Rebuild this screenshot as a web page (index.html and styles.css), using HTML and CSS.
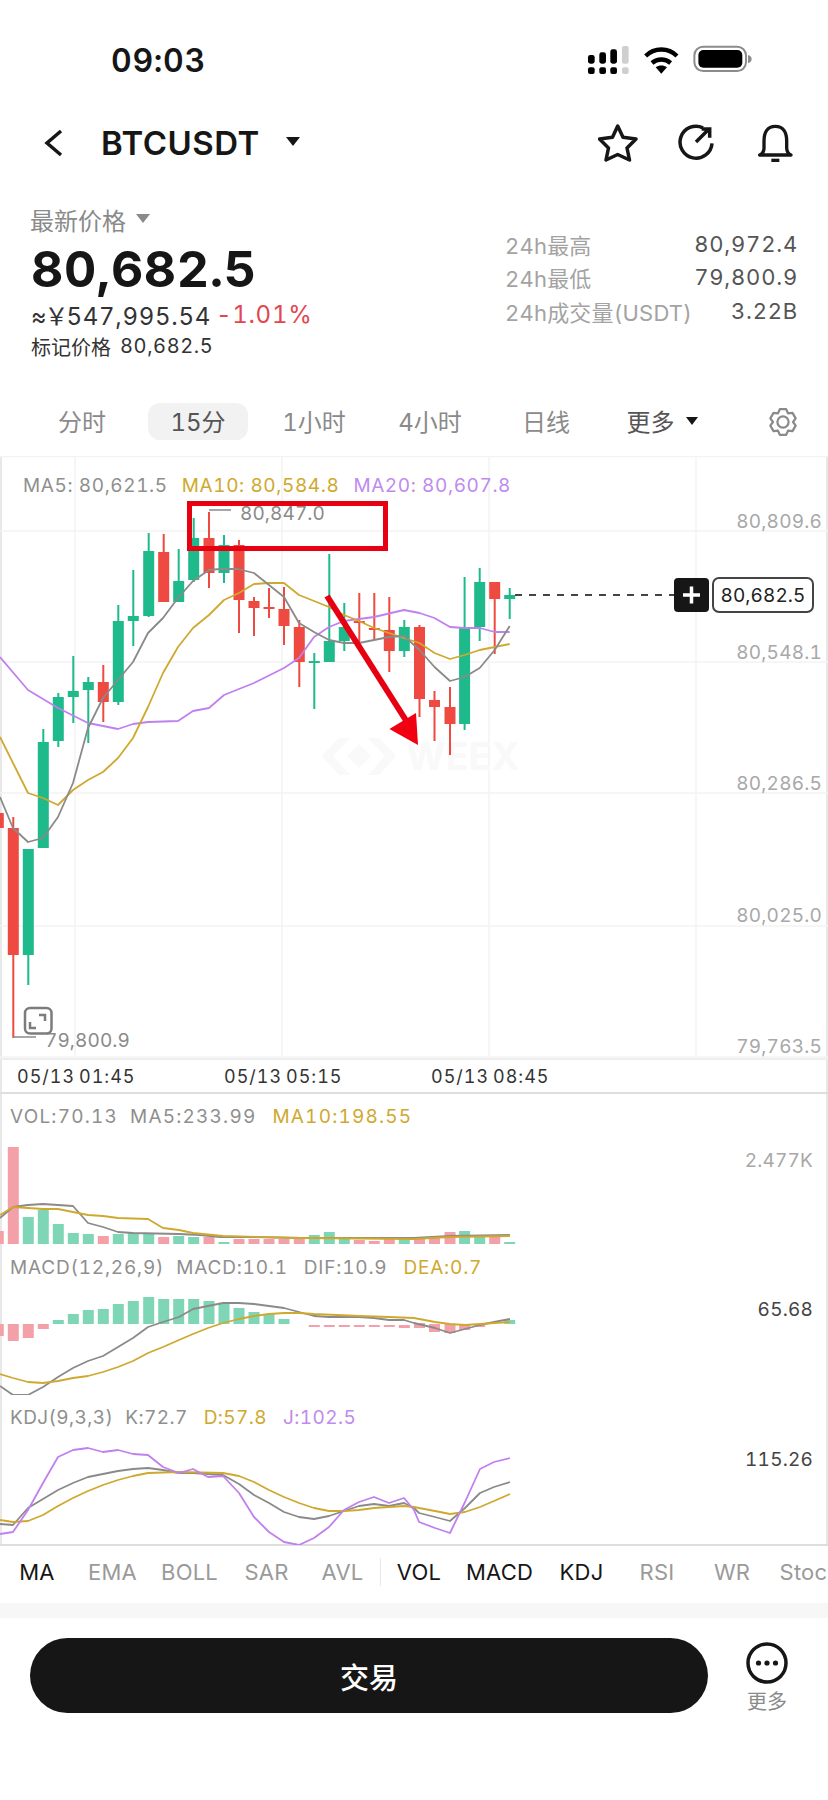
FILE: index.html
```html
<!DOCTYPE html>
<html lang="zh">
<head>
<meta charset="utf-8">
<title>BTCUSDT</title>
<link rel="stylesheet" href="styles.css">
</head>
<body>
<div class="page">
  <div class="status">
    <span class="time">09:03</span>
    <div class="status-icons">
      <svg class="ic-signal" viewBox="20 30 130 90"><g fill="#000"><rect x="23" y="97" width="20" height="20" rx="6"/><rect x="57" y="97" width="20" height="20" rx="6"/><rect x="90" y="97" width="20" height="20" rx="6"/><rect x="23" y="60" width="20" height="26" rx="7"/><rect x="57" y="52" width="20" height="34" rx="7"/><rect x="90" y="43" width="20" height="43" rx="7"/></g><g fill="#cfcfcf"><rect x="125" y="97" width="20" height="20" rx="6"/><rect x="125" y="33" width="20" height="53" rx="6"/></g></svg>
      <svg class="ic-wifi" viewBox="185 30 115 90"><g fill="none" stroke="#000" stroke-width="13"><path d="M196 63C222 37 264 37 290 63"/><path d="M215 84C231 70 255 70 271 84"/></g><path d="M226 97C236 90 250 90 260 97L243 116Z" fill="#000"/></svg>
      <svg class="ic-battery" viewBox="335 35 185 85"><rect x="342" y="40" width="155" height="73" rx="26" fill="#fff" stroke="#8c8c8c" stroke-width="6"/><rect x="354" y="50" width="132" height="53" rx="15" fill="#000"/><path d="M503 65C512 68 514 72 514 77C514 83 511 87 503 90Z" fill="#8c8c8c"/></svg>
    </div>
  </div>

  <header class="nav">
    <svg class="ic-back" viewBox="0 0 20 28"><path d="M17 2L3 14L17 26"/></svg>
    <h1 class="symbol">BTCUSDT</h1>
    <span class="caret caret-dark"></span>
    <div class="nav-actions">
      <svg class="ic-star" viewBox="0 0 40 38"><path d="M19.7 2L25 13.2L38 15L29 24L31.5 36L19.7 30.5L8 36L10.5 24L1.5 15L14.5 13.2Z"/></svg>
      <svg class="ic-share" viewBox="678 124 38 38"><path d="M703 127.8A16 16 0 1 0 712 143.3"/><path d="M696 142L709 129M701.7 129H709.7V137.7"/></svg>
      <svg class="ic-bell" viewBox="500 22 110 122"><path d="M555 32C530 32 521 52 521 76V98Q520 113 508 118H602Q590 113 589 98V76C589 52 580 32 555 32Z"/><path d="M543 134H567"/></svg>
    </div>
  </header>

  <section class="summary">
    <div class="summary-left">
      <div class="latest-label">最新价格<span class="caret caret-gray"></span></div>
      <div class="latest-price">80,682.5</div>
      <div class="latest-fiat"><span><span class="fiat-sign">≈￥</span>547,995.54</span><span class="down">-1.01%</span></div>
      <div class="latest-mark"><span>标记价格</span><span class="mark-num">80,682.5</span></div>
    </div>
    <dl class="stats">
      <div class="stat"><dt>24h最高</dt><dd>80,972.4</dd></div>
      <div class="stat"><dt>24h最低</dt><dd>79,800.9</dd></div>
      <div class="stat"><dt>24h成交量(USDT)</dt><dd>3.22B</dd></div>
    </dl>
  </section>

  <nav class="periods">
    <span class="period">分时</span>
    <span class="period period-active">15分</span>
    <span class="period">1小时</span>
    <span class="period">4小时</span>
    <span class="period">日线</span>
    <span class="period period-more">更多<span class="caret caret-dark"></span></span>
    <svg class="ic-gear" viewBox="0 0 24 24"><path d="M9.27 1.04H14.73L16.3 4.55L20.13 4.15L22.86 8.88L20.6 12L22.86 15.12L20.13 19.85L16.3 19.45L14.73 22.96H9.27L7.7 19.45L3.87 19.85L1.14 15.12L3.4 12L1.14 8.88L3.87 4.15L7.7 4.55Z"/><circle cx="12" cy="12" r="4.800"/></svg>
  </nav>

  <section class="chart">
    <div class="panel panel-main">
      <svg class="plot" viewBox="0 456 828 602">
        <g class="grid">
          <path d="M0 456.5H828M0 531H828M0 662H828M0 793H828M0 926H828M0 1057H828"/>
          <path d="M75 456V1058M282 456V1058M489 456V1058M696 456V1058"/>
        </g>
        <g class="watermark">
          <path d="M322 756L339 738H350L333 756L350 775H339ZM396 756L379 738H368L385 756L368 775H379Z"/>
          <path d="M359 744L371 756L359 768L347 756Z"/>
          <text x="406" y="770">WEEX</text>
        </g>
        <path class="wick-up" d="M28.3 849V985M43.3 729V848M58.3 693V747M73.3 656V723M88.3 677V743M118.3 605V705M133.3 570V646M148.7 533V617M178.7 549V602M193.7 518V582M224 535V583M314.3 653V709M329.3 554V662M344.3 603V651M404.3 620V657M464.6 577V730M479.7 568V641M509.7 588V619"/>
        <path class="body-up" d="M22.8 849h11v106h-11zM37.8 742h11v106h-11zM52.8 697h11v44h-11zM67.8 691h11v6h-11zM82.8 682h11v8h-11zM112.8 621h11v81h-11zM127.8 616h11v5h-11zM143.2 551h11v65h-11zM173.2 581h11v21h-11zM188.2 538h11v42h-11zM218.5 545h11v28h-11zM308.8 661h11v2h-11zM323.8 641h11v21h-11zM338.8 627h11v14h-11zM398.8 627h11v24h-11zM459.1 628h11v96h-11zM474.2 582h11v45h-11zM504.2 595h11v4h-11z"/>
        <path class="wick-down" d="M-2 805V835M13.3 817V1038M103.3 665V722M163.7 534V602M209 512V588M239 540V633M254 597V636M269 588V618M284 587V645M299.3 620V687M359.3 593V642M374.3 593V640M389.3 597V672M419.5 625V717M434.5 691V741M450 687V755M494.7 582V654"/>
        <path class="body-down" d="M-7.2 813h11v15h-11zM7.8 828h11v127h-11zM97.8 682h11v20h-11zM158.2 552h11v50h-11zM203.5 538h11v35h-11zM233.5 545h11v55h-11zM248.5 601h11v7h-11zM263.5 607h11v2h-11zM278.5 609h11v17h-11zM293.8 627h11v35h-11zM353.8 621h11v2h-11zM368.8 628h11v2h-11zM383.8 630h11v21h-11zM414 627h11v72h-11zM429 700h11v7h-11zM444.5 707h11v17h-11zM489.2 582h11v17h-11z"/>
        <polyline class="ma ma-purple" points="0,657 28,690 58,708 88,723 118,729 133,724 148,722 178,721 193,711 209,708 224,695 254,683 284,668 299,658 314,637 329,627 344,621 374,617 404,610 419.5,613 434.5,618 450,627 464.6,628 479.7,628 494.7,632 509.7,632"/>
        <polyline class="ma ma-yellow" points="0,737 28,793 43,798 58,805 73,790 88,780 103,772 118,758 133,738 148,707 163,673 178,647 193,628 209,615 224,600 239,593 254,584 269,583 284,583 299,595 314,601 329,607 344,615 359,621 374,628 389,633 404,638 419.5,643 434.5,653 450,659 464.6,655 479.7,650 494.7,647 509.7,644"/>
        <polyline class="ma ma-gray" points="0,797 13,828 28,842 43,838 58,817 73,783 88,728 103,698 118,680 133,662 148,633 163,618 178,598 193,581 209,570 220,569 238,569 254,573 269,585 284,597 299,623 314,632 329,640 344,643 359,643 374,640 389,637 404,636 419.5,650 434.5,667 450,681 464.6,677 479.7,668 494.7,650 509.7,626"/>
        <path class="mark-line" d="M209 510H231M13 1037H36"/>
        <text class="mark-text" x="240" y="520">80,847.0</text>
        <text class="mark-text" x="45" y="1047">79,800.9</text>
        <text class="axis" x="822" y="528">80,809.6</text>
        <text class="axis" x="822" y="659">80,548.1</text>
        <text class="axis" x="822" y="790">80,286.5</text>
        <text class="axis" x="822" y="922">80,025.0</text>
        <text class="axis" x="822" y="1053">79,763.5</text>
        <path class="last-line" d="M515 595H674"/>
        <rect class="plus-box" x="674" y="578" width="35" height="34" rx="4"/>
        <path class="plus" d="M691.500 586.500V603.500M683 595H700"/>
        <rect class="last-tag" x="713" y="578" width="100" height="34" rx="6"/>
        <text class="last-text" x="763" y="601.500">80,682.5</text>
        <rect class="shot-box" x="189.500" y="503.500" width="196" height="45"/>
        <path class="shot-arrow" d="M327 596L407 722"/>
        <path class="shot-head" d="M416 713L389.400 729L418 745Z"/>
        <g class="ic-expand">
          <rect x="25" y="1008" width="26.500" height="25.500" rx="5"/>
          <path d="M39 1015H45V1021M30 1022V1028H36"/>
        </g>
      </svg>
      <div class="legend legend-main"><span class="c-gray">MA5: 80,621.5</span><span class="c-yellow">MA10: 80,584.8</span><span class="c-purple">MA20: 80,607.8</span></div>
    </div>

    <div class="axis-row"><span>05/13 01:45</span><span>05/13 05:15</span><span>05/13 08:45</span></div>

    <div class="panel panel-sub panel-vol">
      <svg class="plot" viewBox="0 1094 828 151">
        <path class="bar-down" d="M-7.200 1231h11v13h-11zM7.800 1147h11v97h-11zM97.800 1236h11v8h-11zM158.200 1237h11v7h-11zM203.500 1237h11v7h-11zM233.500 1239h11v5h-11zM248.500 1239h11v5h-11zM263.500 1239h11v5h-11zM278.500 1239h11v5h-11zM293.800 1239h11v5h-11zM353.800 1240h11v4h-11zM368.800 1241h11v3h-11zM383.800 1239h11v5h-11zM414 1238h11v6h-11zM429 1238h11v6h-11zM444.500 1232h11v12h-11zM489.200 1237h11v7h-11z"/>
        <path class="bar-up" d="M22.800 1217h11v27h-11zM37.800 1210h11v34h-11zM52.800 1224h11v20h-11zM67.800 1233h11v11h-11zM82.800 1234h11v10h-11zM112.800 1234h11v10h-11zM127.800 1233h11v11h-11zM143.200 1234h11v10h-11zM173.200 1236h11v8h-11zM188.200 1237h11v7h-11zM218.500 1242h11v2h-11zM308.800 1235h11v9h-11zM323.800 1232h11v12h-11zM338.800 1239h11v5h-11zM398.800 1239h11v5h-11zM459.100 1231h11v13h-11zM474.200 1237h11v7h-11zM504.200 1242h11v2h-11z"/>
        <polyline class="ma ma-gray" points="0,1218 13,1207 28,1205 43,1204 73,1206 88,1223 103,1227 118,1232 133,1233 179,1234 200,1235 220,1237 253,1237 300,1238 414,1238 450,1236 510,1235"/>
        <polyline class="ma ma-yellow" points="0,1215 13,1207 43,1209 58,1209 73,1212 88,1215 103,1216 118,1218 148,1219 163,1228 179,1230 193,1233 223,1236 300,1238 414,1239 450,1237 510,1236"/>
        <text class="axis" x="813" y="1167">2.477K</text>
      </svg>
      <div class="legend legend-vol"><span class="c-gray">VOL:70.13</span><span class="c-gray">MA5:233.99</span><span class="c-yellow">MA10:198.55</span></div>
    </div>

    <div class="panel panel-sub panel-macd">
      <svg class="plot" viewBox="0 1245 828 150">
        <path class="bar-down" d="M-7.200 1324h11v12h-11zM7.800 1324h11v17h-11zM22.800 1324h11v14h-11zM37.800 1324h11v5h-11zM308.800 1325h11v2h-11zM323.800 1325h11v2h-11zM338.800 1325h11v2h-11zM353.800 1325h11v2h-11zM368.800 1325h11v2h-11zM383.800 1325h11v2h-11zM398.800 1325h11v3h-11zM414 1323h11v5h-11zM429 1324h11v8h-11zM444.500 1324h11v9h-11zM459.100 1325h11v5h-11zM474.200 1325h11v2h-11z"/>
        <path class="bar-up" d="M52.800 1320h11v4h-11zM67.800 1314h11v10h-11zM82.800 1310h11v14h-11zM97.800 1309h11v15h-11zM112.800 1304h11v20h-11zM127.800 1301h11v23h-11zM143.200 1297h11v27h-11zM158.200 1299h11v25h-11zM173.200 1299h11v25h-11zM188.200 1299h11v25h-11zM203.500 1301h11v23h-11zM218.500 1303h11v21h-11zM233.500 1308h11v16h-11zM248.500 1312h11v12h-11zM263.500 1314h11v10h-11zM278.500 1319h11v5h-11zM504.200 1320h11v4h-11z"/>
        <polyline class="ma ma-gray" points="0,1386 13,1395 28,1395 43,1387 58,1377 73,1368 88,1361 103,1356 118,1347 133,1338 148,1327 163,1322 179,1317 193,1309 208,1306 223,1303 239,1303 254,1304 269,1306 284,1308 299,1312 314,1316 329,1317 359,1317 374,1318 389,1320 404,1320 414,1323 435,1328 450,1333 465,1329 480,1325 494,1322 510,1319"/>
        <polyline class="ma ma-yellow" points="0,1374 13,1378 28,1382 43,1383 58,1381 73,1378 88,1376 103,1372 118,1367 133,1361 148,1353 163,1347 179,1340 193,1334 208,1328 223,1323 239,1319 254,1316 269,1314 284,1313 299,1313 314,1314 359,1316 389,1317 414,1318 435,1322 450,1324 465,1325 480,1324 494,1323 510,1322"/>
        <text class="axis axis-dark" x="813" y="1316">65.68</text>
      </svg>
      <div class="legend"><span class="c-gray">MACD(12,26,9)</span><span class="c-gray">MACD:10.1</span><span class="c-gray">DIF:10.9</span><span class="c-yellow">DEA:0.7</span></div>
    </div>

    <div class="panel panel-sub panel-kdj">
      <svg class="plot" viewBox="0 1395 828 150">
        <polyline class="ma ma-gray" points="0,1524 13,1525 28,1508 43,1499 58,1490 73,1483 88,1477 103,1474 118,1471 133,1469 148,1468 163,1470 179,1473 193,1473 208,1474 223,1475 239,1484 254,1495 269,1503 284,1512 299,1517 314,1519 329,1516 344,1511 359,1506 374,1504 389,1506 404,1503 414,1508 419,1513 435,1517 450,1521 465,1508 480,1493 494,1487 510,1482"/>
        <polyline class="ma ma-yellow" points="0,1520 13,1522 28,1521 43,1515 58,1506 73,1498 88,1491 103,1485 118,1480 133,1476 148,1473 179,1472 223,1473 239,1476 254,1482 269,1490 284,1497 299,1503 314,1508 329,1511 344,1511 359,1510 374,1508 389,1507 404,1506 414,1507 419,1508 435,1511 450,1514 465,1512 480,1507 494,1501 510,1494"/>
        <polyline class="ma ma-purple" points="0,1534 13,1532 28,1510 43,1483 58,1457 73,1450 88,1448 103,1452 118,1450 133,1454 148,1455 163,1467 179,1473 193,1469 208,1477 223,1476 239,1493 254,1517 269,1532 284,1542 299,1545 314,1538 329,1527 344,1510 359,1502 374,1497 389,1503 404,1498 414,1510 419,1522 435,1528 450,1533 465,1502 480,1469 494,1462 510,1458"/>
        <text class="axis axis-dark" x="813" y="1466">115.26</text>
      </svg>
      <div class="legend legend-kdj"><span class="c-gray">KDJ(9,3,3)</span><span class="c-gray">K:72.7</span><span class="c-yellow">D:57.8</span><span class="c-purple">J:102.5</span></div>
    </div>
  </section>

  <nav class="indicators">
    <span class="ind ind-on">MA</span><span class="ind">EMA</span><span class="ind">BOLL</span><span class="ind">SAR</span><span class="ind">AVL</span><span class="ind ind-on ind-split">VOL</span><span class="ind ind-on">MACD</span><span class="ind ind-on">KDJ</span><span class="ind">RSI</span><span class="ind">WR</span><span class="ind">Stoch</span>
  </nav>
  <div class="band"></div>

  <footer class="actions">
    <button class="trade">交易</button>
    <div class="more">
      <svg class="ic-more" viewBox="0 0 42 42"><circle class="ring" cx="21" cy="21" r="19"/><circle cx="12.500" cy="21" r="2.600"/><circle cx="21" cy="21" r="2.600"/><circle cx="29.500" cy="21" r="2.600"/></svg>
      <span>更多</span>
    </div>
  </footer>
</div>
</body>
</html>
```
FILE: styles.css
```css
* { box-sizing: border-box; }
html, body { margin: 0; padding: 0; background: #fff; }
body { font-family: Inter, "Noto Sans CJK SC", sans-serif; color: #161616; font-variant-numeric: tabular-nums; }
.page { width: 828px; height: 1800px; overflow: hidden; background: #fff; }

.status { height: 100px; display: flex; align-items: flex-start; padding: 42px 0 0 111px; }
.time { font-size: 32px; line-height: 38px; font-weight: 600; letter-spacing: .7px; }
.status-icons { margin-left: auto; display: flex; align-items: flex-start; padding-right: 74.6px; margin-top: 3px; }
.ic-signal { width: 43.3px; height: 30px; }
.ic-wifi { width: 38.3px; height: 30px; margin-left: 11.7px; }
.ic-battery { width: 61.7px; height: 28.3px; margin-left: 11.7px; }

.nav { height: 80px; display: flex; align-items: center; padding: 0 34.7px 0 44px; margin-top: 3px; }
.ic-back { width: 20px; height: 28px; fill: none; stroke: #161616; stroke-width: 3.5; }
.symbol { margin: 0 0 0 37px; font-size: 33px; line-height: 40px; font-weight: 600; letter-spacing: .5px; }
.caret { display: inline-block; width: 0; height: 0; border-left: 7px solid transparent; border-right: 7px solid transparent; border-top: 9px solid #161616; }
.nav .caret { margin-left: 26px; margin-top: -4px; }
.nav-actions { margin-left: auto; display: flex; align-items: center; }
.ic-star { width: 40px; height: 38px; fill: none; stroke: #161616; stroke-width: 3.5; stroke-linejoin: round; }
.ic-share { width: 38px; height: 38px; margin-left: 40px; fill: none; stroke: #161616; stroke-width: 3.5; }
.ic-bell { width: 36.7px; height: 40.7px; margin-left: 40.7px; fill: none; stroke: #161616; stroke-width: 10; stroke-linejoin: round; }

.summary { height: 220px; display: flex; justify-content: space-between; padding: 16px 30px 0 32px; }
.summary-left { display: flex; flex-direction: column; }
.latest-label { display: flex; align-items: center; height: 40px; font-size: 24px; color: #8a8a8a; margin-left: -2px; }
.caret-gray { border-top-color: #8a8a8a; margin-left: 10px; margin-top: -2px; }
.latest-price { font-size: 50px; line-height: 60px; height: 60px; font-weight: 700; margin-left: -1px; letter-spacing: .6px; }
.latest-fiat { display: flex; gap: 5px; align-items: center; height: 30px; font-size: 24px; color: #333; letter-spacing: .7px; margin-left: -1px; }
.fiat-sign { letter-spacing: -2px; }
.down { color: #e2474f; }
.latest-mark { display: flex; gap: 9px; align-items: center; height: 34px; font-size: 20px; color: #333; margin-left: -1px; }
.mark-num { letter-spacing: .6px; }
.stats { margin: 28px 0 0; width: 293px; }
.stat { display: flex; justify-content: space-between; height: 33.5px; align-items: center; font-size: 22px; letter-spacing: .2px; }
.stat dt { color: #a3a3a3; }
.stat dd { margin: 0; color: #555; letter-spacing: .8px; }

.periods { display: grid; grid-template-columns: repeat(6, 116px) auto; height: 37px; padding-left: 24px; align-items: center; justify-items: center; }
.period { width: 100px; height: 37px; line-height: 40px; border-radius: 12px; text-align: center; font-size: 24px; color: #8a8a8a; white-space: nowrap; }
.period-active { background: #f2f2f2; color: #555; }
.period-more { color: #555; display: flex; align-items: center; justify-content: center; gap: 11px; padding-top: 3px; }
.period-more .caret { border-left-width: 6.5px; border-right-width: 6.5px; border-top-width: 8px; margin-top: -4px; }
.ic-gear { width: 28px; height: 28px; margin-left: 17px; fill: none; stroke: #8a8a8a; stroke-width: 1.9; stroke-linejoin: round; }

.chart { margin-top: 16px; height: 1090px; box-shadow: inset 2px 0 #e8e8e8, inset -2px 0 #e8e8e8; border-bottom: 2px solid #dedede; }
.panel { position: relative; }
.panel-main { height: 602px; }
.plot { position: absolute; left: 0; top: 0; width: 100%; height: 100%; overflow: hidden; }
.panel-sub { height: 150px; }
.panel-vol { height: 151px; }
.legend { position: relative; display: flex; padding: 11px 0 0 10px; font-size: 19px; line-height: 24px; letter-spacing: .8px; white-space: nowrap; }
.legend span + span { margin-left: 16px; }
.legend span:nth-child(2) { margin-left: 12px; }
.legend-main { padding: 18px 0 0 23px; letter-spacing: .6px; }
.legend-main span + span, .legend-main span:nth-child(2) { margin-left: 14px; }
.legend-vol { letter-spacing: 1.2px; }
.legend-kdj { letter-spacing: .4px; }
.c-gray { color: #8f8f8f; }
.c-yellow { color: #cfa92f; }
.c-purple { color: #c08bec; }

.grid path { fill: none; stroke: #f3f3f3; stroke-width: 1.5; }
.watermark path { fill: #f9f9f9; }
.watermark text { font-size: 38px; font-weight: 700; fill: #f9f9f9; }
.wick-up { fill: none; stroke: #1fba8c; stroke-width: 2; }
.wick-down { fill: none; stroke: #ef4a41; stroke-width: 2; }
.body-up { fill: #1fba8c; }
.body-down { fill: #ef4a41; }
.bar-up { fill: #7fd6b6; }
.bar-down { fill: #f4a0a8; }
.ma { fill: none; stroke-width: 1.8; stroke-linejoin: round; }
.ma-gray { stroke: #8a8a8a; }
.ma-yellow { stroke: #cfa92f; }
.ma-purple { stroke: #c080ee; }
.mark-line { fill: none; stroke: #8a8a8a; stroke-width: 1.5; }
.mark-text { font-size: 19px; fill: #8a8a8a; letter-spacing: .1px; }
.axis { font-size: 19px; fill: #a8a8a8; text-anchor: end; letter-spacing: .2px; }
.axis-dark { fill: #444; }
.last-line { fill: none; stroke: #444; stroke-width: 2; stroke-dasharray: 7 7; }
.plus-box { fill: #161616; }
.plus { fill: none; stroke: #fff; stroke-width: 3.5; }
.last-tag { fill: #fff; stroke: #444; stroke-width: 2; }
.last-text { font-size: 19px; fill: #222; text-anchor: middle; letter-spacing: .1px; }
.shot-box { fill: none; stroke: #e60012; stroke-width: 5; }
.shot-arrow { fill: none; stroke: #e60012; stroke-width: 6; }
.shot-head { fill: #f00010; }
.ic-expand rect { fill: #fff; fill-opacity: .4; stroke: #7c7c7c; stroke-width: 2.5; }
.ic-expand path { fill: none; stroke: #7c7c7c; stroke-width: 2.5; }

.axis-row { height: 36px; display: grid; grid-template-columns: repeat(3, 207px); align-items: center; padding-left: 17px; font-size: 18px; color: #333; letter-spacing: 1px; word-spacing: -2px; border-top: 2px solid #eee; border-bottom: 2px solid #dedede; white-space: nowrap; }

.indicators { height: 57px; display: grid; grid-template-columns: 74px 77px 77px 77px 75px 77px 85px 79px 72px 78px 78px; align-items: center; justify-items: center; padding-bottom: 6px; font-size: 22px; letter-spacing: .2px; overflow: hidden; }
.ind { color: #9a9a9a; white-space: nowrap; }
.ind-on { color: #161616; }
.ind-split { width: 100%; text-align: center; border-left: 1px solid #e8e8e8; line-height: 28px; }
.band { height: 15px; background: #f7f7f7; }

.actions { display: flex; align-items: flex-start; padding: 20px 0 0 30px; }
.trade { width: 678px; height: 75px; border: 0; border-radius: 38px; background: #161616; color: #fff; font-family: inherit; font-size: 29px; font-weight: 500; }
.more { margin-left: 30px; width: 58px; display: flex; flex-direction: column; align-items: center; font-size: 20px; line-height: 26px; color: #8a8a8a; padding-top: 4px; }
.ic-more { width: 42px; height: 42px; margin-bottom: 5px; fill: #161616; }
.ic-more .ring { fill: none; stroke: #161616; stroke-width: 3.5; }
```
